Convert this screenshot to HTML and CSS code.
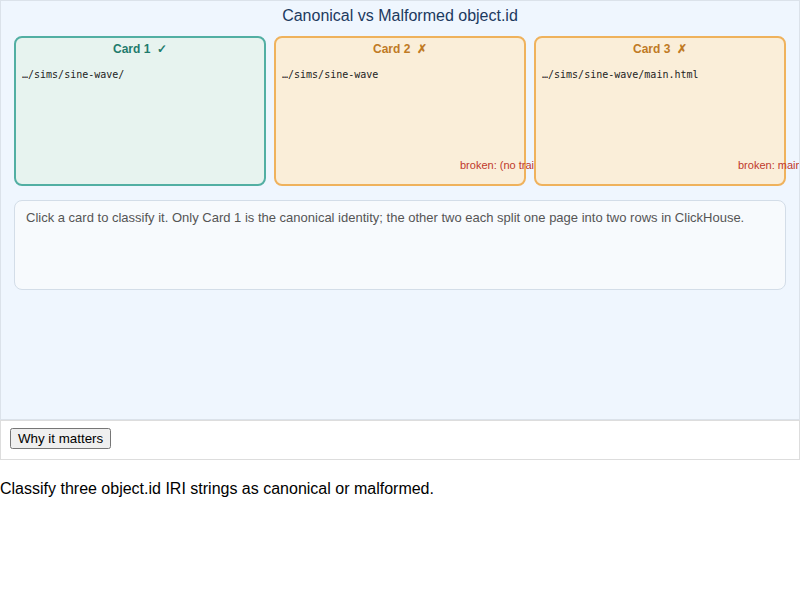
FILE: index.html
```html
<!DOCTYPE html>
<html lang="en">
<head>
  <meta charset="UTF-8" />
  <meta name="viewport" content="width=device-width, initial-scale=1.0" />
  <title>Canonical vs Malformed object.id</title>
  <link rel="stylesheet" href="styles.css">
</head>
<body>
  <div class="stage">
    <h1 class="stage-title">Canonical vs Malformed object.id</h1>

    <div class="cards">
      <div class="card good">
        <div class="card-title">Card 1 &nbsp;✓</div>
        <div class="iri">…/sims/sine-wave/</div>
      </div>
      <div class="card bad">
        <div class="card-title">Card 2 &nbsp;✗</div>
        <div class="iri">…/sims/sine-wave</div>
        <div class="note note-2">broken: (no trailing slash)</div>
      </div>
      <div class="card bad">
        <div class="card-title">Card 3 &nbsp;✗</div>
        <div class="iri">…/sims/sine-wave/main.html</div>
        <div class="note note-3">broken: main.html suffix</div>
      </div>
    </div>

    <div class="explain">
      Click a card to classify it. Only Card 1 is the canonical identity; the other two each split one page into two rows in ClickHouse.
    </div>
  </div>

  <div class="controls">
    <button class="why-btn">Why it matters</button>
  </div>

  <p class="caption">Classify three object.id IRI strings as canonical or malformed.</p>
</body>
</html>
```

FILE: styles.css
```css
body {
  margin: 0;
  font-family: 'Liberation Sans', Arial, sans-serif;
  background: #fff;
}
.stage {
  height: 420px;
  box-sizing: border-box;
  border: 1px solid #dbe2ea;
  background: #eff6fe;
  padding: 0 13px;
  overflow: hidden;
}
.stage-title {
  margin: 5px 0 10px;
  font-size: 16px;
  font-weight: normal;
  line-height: 20px;
  text-align: center;
  color: #1c3a5e;
}
.cards {
  display: grid;
  grid-template-columns: repeat(3, 1fr);
  gap: 8px;
}
.card {
  position: relative;
  height: 150px;
  box-sizing: border-box;
  border: 2px solid;
  border-radius: 8px;
  padding: 3px 6px;
}
.card.good {
  border-color: #52afa3;
  background: #e7f3ef;
}
.card.bad {
  border-color: #efb25c;
  background: #faeed9;
}
.card-title {
  font-size: 12px;
  font-weight: bold;
  line-height: 16px;
  text-align: center;
}
.good .card-title {
  color: #1f7b6c;
}
.bad .card-title {
  color: #c07a24;
}
.iri {
  margin-top: 11px;
  font-family: 'DejaVu Sans Mono', 'Liberation Mono', monospace;
  font-size: 10px;
  line-height: 14px;
  color: #222;
}
.note {
  position: absolute;
  top: 120px;
  font-size: 11px;
  line-height: 14px;
  color: #c0392b;
  white-space: nowrap;
}
.note-2 {
  left: 184px;
}
.note-3 {
  left: 202px;
}
.explain {
  margin-top: 14px;
  height: 90px;
  box-sizing: border-box;
  border: 1px solid #d3dde8;
  border-radius: 8px;
  background: #f7fafd;
  padding: 9px 11px;
  font-size: 13px;
  line-height: 16px;
  color: #555;
}
.controls {
  height: 40px;
  box-sizing: border-box;
  border: 1px solid #ddd;
  padding: 7px 9px;
  background: #fff;
}
.why-btn {
  font-family: 'Liberation Sans', Arial, sans-serif;
  font-size: 13.33px;
}
.caption {
  margin: 20px 0;
  font-size: 16px;
  color: #000;
}
```
